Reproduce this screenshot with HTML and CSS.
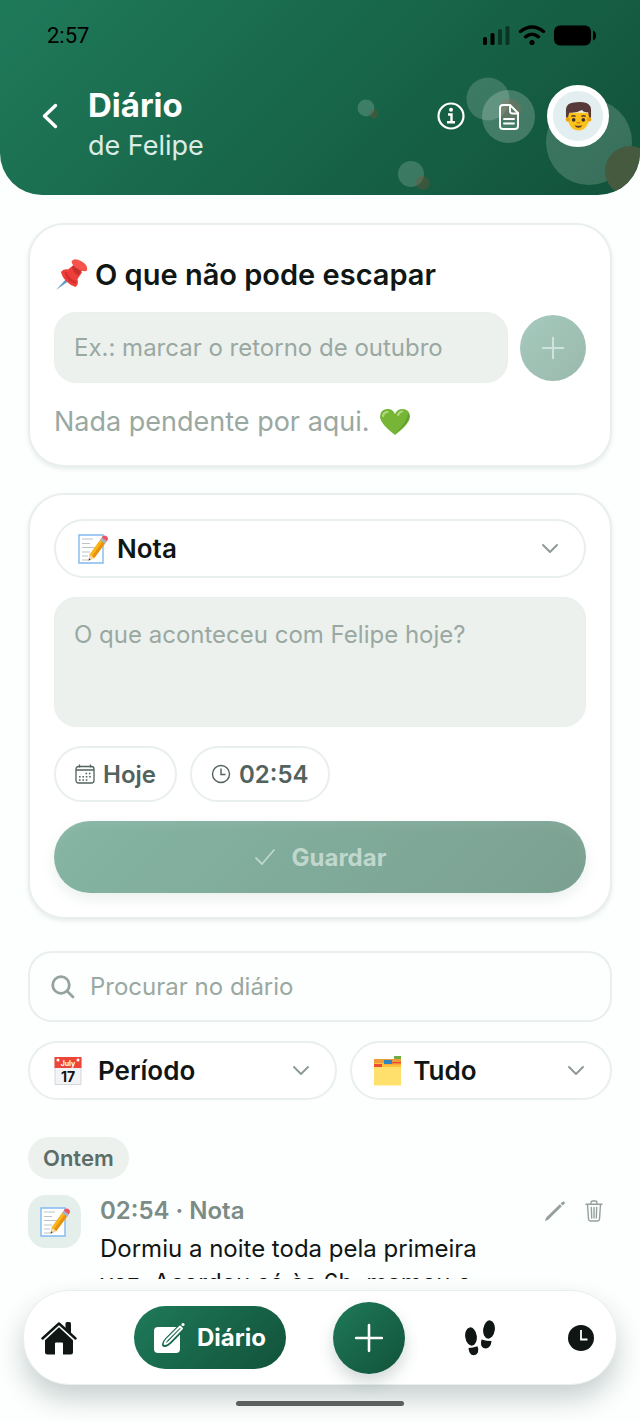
FILE: index.html
```html
<!DOCTYPE html>
<html lang="pt-BR">

<head>
    <meta charset="UTF-8">
    <meta name="viewport" content="width=device-width, initial-scale=1.0">
    <title>Diário de Felipe</title>
    <link rel="stylesheet" href="styles.css">
</head>

<body>
    <!-- shared icons -->
    <svg class="sprite" aria-hidden="true">
        <symbol id="memo" viewBox="0 0 30 30">
            <path d="M1 1h24v28H1z" fill="#fff" stroke="#82b9ee" stroke-width="1.4"/>
            <path d="M4 5h11M4 9.500h8M4 13.500h15M4 18h8M4 22h6M4 26h8" stroke="#b9c3c8" stroke-width="1"/>
            <path d="M11.500 20.500 23 4.500l5 3.800L16.300 24l-5.600 2.600z" fill="#fbb41a"/>
            <path d="M14 22.300 25.500 6.300l2.500 2L16.300 24z" fill="#e99211"/>
            <path d="M11.500 20.500l4.800 3.500-5.600 2.600z" fill="#f3d6a4"/>
            <path d="M11 24.300l1.700 1.300-2 1z" fill="#3b3b3b"/>
            <path d="M22 5.900l1.700-2.300 5 3.800L27 9.700z" fill="#9fb6c3"/>
            <path d="M23.700 3.600l1-1.400q2-1.600 4 0t.900 3.900l-.9 1.300z" fill="#ee5461"/>
        </symbol>
        <symbol id="chevron" viewBox="0 0 18 11">
            <path d="M2 2l7 7 7-7" fill="none" stroke="currentColor" stroke-width="2" stroke-linecap="round" stroke-linejoin="round"/>
        </symbol>
        <symbol id="plus" viewBox="0 0 28 28">
            <path d="M14 2v24M2 14h24" fill="none" stroke="currentColor" stroke-width="2.400" stroke-linecap="round"/>
        </symbol>
    </svg>

    <header class="header">
        <svg class="bubbles" viewBox="0 0 300 195" width="300" height="195" aria-hidden="true">
            <g fill="#fff" fill-opacity=".17">
                <circle cx="26" cy="108" r="8.500"/>
                <circle cx="148" cy="99" r="21.500"/>
                <circle cx="71" cy="174" r="13"/>
                <circle cx="249" cy="142" r="43"/>
            </g>
            <g fill="#8a4a2c" fill-opacity=".3">
                <circle cx="34" cy="114" r="4.500"/>
                <circle cx="170" cy="110" r="11"/>
                <circle cx="83" cy="183" r="7"/>
            </g>
            <circle cx="290" cy="171" r="25" fill="#465a3f"/>
        </svg>

        <div class="status">
            <span>2:57</span>
            <svg viewBox="0 0 114 22" width="114" height="22" aria-hidden="true">
                <rect x="1" y="13" width="4" height="8" rx="1.500"/>
                <rect x="8.500" y="9" width="4" height="12" rx="1.500"/>
                <g opacity=".45">
                    <rect x="16" y="5" width="4" height="16" rx="1.500"/>
                    <rect x="23.500" y="2" width="4" height="19" rx="1.500"/>
                </g>
                <g fill="none" stroke="#000" stroke-width="3.400" stroke-linecap="round">
                    <path d="M38.500 7.500q11.500-9 23 0"/>
                    <path d="M43.500 12.800q6.500-5 13 0"/>
                </g>
                <circle cx="50" cy="18.500" r="2.600"/>
                <rect x="72" y="1.500" width="37" height="20" rx="6"/>
                <path d="M111 6.500q3 1 3 5t-3 5z"/>
            </svg>
        </div>

        <div class="header-row">
            <button class="icon-btn back" aria-label="Voltar">
                <svg viewBox="0 0 16 26" width="16" height="26"><path d="M13.500 2.500 2.500 13l11 10.500" fill="none" stroke="#fff" stroke-width="3.400" stroke-linecap="round" stroke-linejoin="round"/></svg>
            </button>
            <div class="header-title">
                <h1>Diário</h1>
                <p>de Felipe</p>
            </div>
            <button class="icon-btn info" aria-label="Informações">
                <svg viewBox="0 0 28 28" width="28" height="28" fill="none" stroke="#fff">
                    <circle cx="14" cy="14" r="12.500" stroke-width="2.200"/>
                    <path d="M11 12.500h3.500V20M10 20.300h8" stroke-width="2.400"/>
                    <circle cx="14" cy="7.800" r="2" fill="#fff" stroke="none"/>
                </svg>
            </button>
            <button class="icon-btn report" aria-label="Relatório">
                <svg viewBox="0 0 22 28" width="22" height="28" fill="none" stroke="#fff" stroke-width="1.900" stroke-linejoin="round" stroke-linecap="round">
                    <path d="M12 2H5Q2 2 2 5v18q0 3 3 3h12q3 0 3-3V10z"/>
                    <path d="M12 2.500V8q0 2.500 2.500 2.500H20M6 16h10M6 20.500h10"/>
                </svg>
            </button>
            <button class="icon-btn avatar" aria-label="Felipe">
                <svg viewBox="0 0 28 32" width="27" height="31">
                    <path d="M3 12h22v6q0 5-3 8.500-3.500 4-8 4t-8-4Q3 23 3 18z" fill="#fcc21b"/>
                    <circle cx="3" cy="19" r="2.300" fill="#e9a40c"/>
                    <circle cx="25" cy="19" r="2.300" fill="#e9a40c"/>
                    <path d="M1 17V9Q1.500 2 9 1.500q5-1 10-.2Q26.500 2 27 9v8h-2l-1-5.500q-4.500.7-6.500-2.200-5 3.200-13 2.700L3 17z" fill="#58393a"/>
                    <path d="M6.500 16q2.500-1.500 4.500 0M17 16q2-1.500 4.500 0" fill="none" stroke="#58393a" stroke-width="1.400"/>
                    <circle cx="9" cy="19.500" r="1.900" fill="#3c302e"/>
                    <circle cx="19" cy="19.500" r="1.900" fill="#3c302e"/>
                    <path d="M12.500 22.500h3" stroke="#d98b07" stroke-width="1.600" stroke-linecap="round"/>
                    <path d="M10 25q4 1.200 8 0-1 2.600-4 2.600T10 25z" fill="#5d3a2c"/>
                </svg>
            </button>
        </div>
    </header>

    <main class="content">
        <section class="card pending">
            <h2>
                <svg viewBox="0 0 34 34" width="34" height="34" aria-hidden="true">
                    <path d="M2 32 13 20l2.500 2.500z" fill="#5e9dc8"/>
                    <path d="M7 14q2-3.500 7-2.500l6-5 8 8-4.500 6.500q1.500 5-2 8Q17 28 12.500 23.500T7 14z" fill="#ee3f3b"/>
                    <path d="M13 14q3 8 9.500 9l-1 3Q12 24 10.500 14z" fill="#c62828" opacity=".6"/>
                    <path d="M18 9l5.500-4 5.500 6-4.500 6.500Q19 15 18 9z" fill="#c9302c"/>
                    <path d="M17.500 3.500Q20-.5 27 3t6 9.500q-3 2-9-1.500t-6.500-7.500z" fill="#f5534b"/>
                </svg>
                O que não pode escapar
            </h2>
            <form class="pending-form">
                <input class="field" type="text" aria-label="Nova pendência" placeholder="Ex.: marcar o retorno de outubro">
                <button class="add-btn" type="button" aria-label="Adicionar" disabled>
                    <svg width="24" height="24"><use href="#plus"/></svg>
                </button>
            </form>
            <p class="pending-empty">
                Nada pendente por aqui.
                <svg viewBox="0 0 32 28" width="32" height="28" aria-hidden="true">
                    <path d="M16 27Q1 15.500 1 8.500 1.500 1 8.500 1 14 1 16 6q2-5 7.500-5Q30.500 1 31 8.500 31 15.500 16 27z" fill="#76b536"/>
                    <path d="M4 8q1-4 4.500-4M19 7q1.500-3.200 4-3.500" fill="none" stroke="#b3d981" stroke-width="2.200" stroke-linecap="round"/>
                    <path d="M29.500 4.500q4 9-13.500 21 12-10 13.500-21z" fill="#518f2a" opacity=".6"/>
                </svg>
            </p>
        </section>

        <form class="card entry-form">
            <label class="select">
                <svg width="30" height="30" aria-hidden="true"><use href="#memo"/></svg>
                <select aria-label="Tipo de registro">
                    <option>Nota</option>
                </select>
                <svg class="chevron" width="18" height="11" aria-hidden="true"><use href="#chevron"/></svg>
            </label>
            <textarea class="field" aria-label="Registro" placeholder="O que aconteceu com Felipe hoje?"></textarea>
            <div class="chips">
                <button class="chip" type="button">
                    <svg viewBox="0 0 20 20" width="20" height="20" fill="none" stroke="currentColor">
                        <rect x="1" y="2.500" width="18" height="16.500" rx="2.500" stroke-width="1.300"/>
                        <path d="M1 6h18M4.500.500v3M15.500.500v3" stroke-width="1.300"/>
                        <path d="M10.500 9.500h6M4 12.800h12.500M4 16h9" stroke-width="1.600" stroke-dasharray="1.600 1.800"/>
                    </svg>
                    Hoje
                </button>
                <button class="chip" type="button">
                    <svg viewBox="0 0 20 20" width="20" height="20" fill="none" stroke="currentColor" stroke-width="1.400">
                        <circle cx="10" cy="10" r="8.500"/>
                        <path d="M10 4.500v6h4.500"/>
                    </svg>
                    02:54
                </button>
            </div>
            <button class="save-btn" type="button" disabled>
                <svg viewBox="0 0 22 18" width="22" height="18"><path d="M2 10l6 6L20 2" fill="none" stroke="currentColor" stroke-width="1.800" stroke-linecap="round" stroke-linejoin="round"/></svg>
                Guardar
            </button>
        </form>

        <label class="search">
            <svg viewBox="0 0 24 24" width="24" height="24" fill="none" stroke="currentColor" stroke-width="2.800" stroke-linecap="round" aria-hidden="true">
                <circle cx="10" cy="10" r="8.300"/>
                <path d="M16 16l6 6"/>
            </svg>
            <input type="search" aria-label="Procurar no diário" placeholder="Procurar no diário">
        </label>

        <div class="filters">
            <label class="select period">
                <svg viewBox="0 0 28 28" width="28" height="28" aria-hidden="true">
                    <path d="M1 1h26v26.500H1z" fill="#f2f3f4" stroke="#d3d7da" stroke-width="1"/>
                    <path d="M.500 0h27v11H.500z" fill="#ee4539"/>
                    <circle cx="4" cy="3" r="1.500" fill="#fff"/>
                    <circle cx="24" cy="3" r="1.500" fill="#fff"/>
                    <text class="cal-month" x="14" y="8.500">July</text>
                    <text class="cal-day" x="14" y="25">17</text>
                </svg>
                <select aria-label="Período">
                    <option>Período</option>
                </select>
                <svg class="chevron" width="18" height="11" aria-hidden="true"><use href="#chevron"/></svg>
            </label>
            <label class="select">
                <svg viewBox="0 0 30 30" width="30" height="30" aria-hidden="true">
                    <path d="M20 0h7v4h-7z" fill="#71ad45"/>
                    <path d="M0 3h27v10H0z" fill="#f19b38"/>
                    <path d="M10 4h8v4h-8z" fill="#2e86c1"/>
                    <path d="M0 7h10v1.500h17V11H0z" fill="#ffc13b"/>
                    <path d="M18 6h9v1.200h-9zM0 8h8v3H0z" fill="#ee4b32"/>
                    <path d="M0 11h27v18.500H0z" fill="#ffe06c"/>
                </svg>
                <select aria-label="Tipo">
                    <option>Tudo</option>
                </select>
                <svg class="chevron" width="18" height="11" aria-hidden="true"><use href="#chevron"/></svg>
            </label>
        </div>

        <h3 class="day">Ontem</h3>
        <article class="entry">
            <div class="entry-icon">
                <svg width="30" height="30" aria-hidden="true"><use href="#memo"/></svg>
            </div>
            <div class="entry-text">
                <h4>02:54 · Nota</h4>
                <p>Dormiu a noite toda pela primeira vez. Acordou só às 6h, mamou e</p>
            </div>
            <div class="entry-actions">
                <button class="icon-btn" aria-label="Editar">
                    <svg viewBox="0 0 20 20" width="20" height="20"><path d="M0 20l1.200-3.500L14.800 3.200l2 2L3.200 18.800zM15.600 2.400 17.200.900q1.500-1 2.300 0t0 1.900l-1.700 1.600z" fill="currentColor"/></svg>
                </button>
                <button class="icon-btn" aria-label="Excluir">
                    <svg viewBox="0 0 18 22" width="18" height="22" fill="none" stroke="currentColor" stroke-width="1.400" stroke-linecap="round">
                        <path d="M1 4.300h16M6 4V2.500Q6 1 7.500 1h3Q12 1 12 2.500V4M2.500 4.500l1 14.500q.2 2 2 2h7q1.800 0 2-2l1-14.500M6.300 7.500l.4 10.500M9 7.500V18M11.700 7.500 11.300 18"/>
                    </svg>
                </button>
            </div>
        </article>
    </main>

    <footer class="footer">
        <nav class="tabs">
            <a class="tab" href="#" aria-label="Início">
                <svg viewBox="0 0 36 34" width="36" height="34">
                    <path d="M1.500 17.500 18 2.500l16.500 15" fill="none" stroke="currentColor" stroke-width="2.400" stroke-linecap="round" stroke-linejoin="round"/>
                    <path d="M24.500 2.500q0-1.500 1.500-1.500h2.500q1.500 0 1.500 1.500v10l-5.500-5z" fill="currentColor"/>
                    <path d="M18 6.200l14 13V31q0 2.500-2.500 2.500H22v-11q0-1-1-1h-6q-1 0-1 1v11H6.500Q4 33.500 4 31V19.200z" fill="currentColor"/>
                </svg>
            </a>
            <a class="tab active" href="#">
                <svg viewBox="0 0 32 32" width="32" height="32">
                    <rect x="1" y="5" width="26" height="26" rx="4" fill="#fff"/>
                    <path d="M28 4 14.500 17.500q-2.500 2.500-3 5 2.500 0 5-2.800L30 6" fill="none" stroke="#17694b" stroke-width="5" stroke-linejoin="round"/>
                    <path d="M27 4.500 14 17.500q-2.500 2.500-2.500 4.500 2 .5 4.800-2.300L29 6.500z" fill="#17694b" stroke="#fff" stroke-width="1.900" stroke-linejoin="round"/>
                    <circle cx="30" cy="2.500" r="1.600" fill="#fff"/>
                </svg>
                Diário
            </a>
            <a class="tab add" href="#" aria-label="Novo registro">
                <svg width="30" height="30"><use href="#plus"/></svg>
            </a>
            <a class="tab" href="#" aria-label="Passos">
                <svg viewBox="0 0 32 36" width="32" height="36" fill="currentColor">
                    <ellipse cx="7" cy="16.500" rx="5.800" ry="9.200" transform="rotate(-8 7 16.500)"/>
                    <path d="M4.500 28q4.500 0 9-1.700 1.500 3.200.5 6-1.500 3-4.500 3-4.500-.5-5-7.300z"/>
                    <ellipse cx="25" cy="9.500" rx="5.800" ry="9.200" transform="rotate(8 25 9.500)"/>
                    <path d="M17.500 19.500q5 1.500 10 1.500-.5 7-5.500 7.500-3.500 0-4.700-3-.6-3 .2-6z"/>
                </svg>
            </a>
            <a class="tab" href="#" aria-label="Histórico">
                <svg viewBox="0 0 26 26" width="26" height="26">
                    <circle cx="13" cy="13" r="13" fill="currentColor"/>
                    <path d="M13 5v9.500h6.500" fill="none" stroke="#fff" stroke-width="1.800"/>
                </svg>
            </a>
        </nav>
        <div class="home-bar"></div>
    </footer>
</body>

</html>
```
FILE: styles.css
```css
*{
    box-sizing: border-box;
    margin: 0;
    padding: 0;
}
:root{
    --ink: #0f1614;
    --muted: #9aa8a2;
    --soft: #ecf1ee;
    --line: #e9efed;
    --green: linear-gradient(135deg, #1f7a5a, #11523a);
}
body{
    height: 100vh;
    display: flex;
    flex-direction: column;
    overflow: hidden;
    background: #fdfefe;
    color: var(--ink);
    font-family: Inter, "Liberation Sans", sans-serif;
    font-size: 24px;
}
svg{
    flex: none;
}
button, input, select, textarea{
    font: inherit;
    color: inherit;
    border: none;
    outline: none;
    background: none;
}
input, select{
    min-width: 0;
}
::placeholder{
    color: var(--muted);
    opacity: 1;
}
.sprite{
    position: absolute;
    width: 0;
    height: 0;
}

/* header */
.header{
    position: relative;
    flex: none;
    padding: 0 31px 28px 32px;
    border-radius: 0 0 42px 42px;
    overflow: hidden;
    background: var(--green);
    color: #fff;
}
.bubbles{
    position: absolute;
    top: 0;
    right: 0;
}
.status{
    position: relative;
    height: 70px;
    margin-bottom: 15px;
    padding: 0 13px 0 15px;
    display: flex;
    align-items: center;
    justify-content: space-between;
    color: #000;
    font-family: Roboto, sans-serif;
    font-size: 22px;
}
.header-row{
    position: relative;
    display: flex;
    gap: 12px;
}
.header-title{
    flex: 1;
    padding-left: 8px;
}
.header-title h1{
    font-size: 33px;
    font-weight: 700;
    line-height: 40px;
}
.header-title p{
    font-size: 27px;
    line-height: 42px;
    color: #dcece5;
}
.icon-btn{
    display: flex;
    align-items: center;
    justify-content: center;
    cursor: pointer;
}
.back{
    width: 36px;
    height: 62px;
}
.info{
    width: 38px;
    height: 62px;
}
.report{
    width: 53px;
    height: 53px;
    margin-top: 5px;
    border-radius: 50%;
    background: rgba(255,255,255,.2);
}
.avatar{
    width: 62px;
    height: 62px;
    border: 6px solid #fff;
    border-radius: 50%;
    background: #e3eef0;
}

/* content */
.content{
    flex: 1;
    min-height: 0;
    padding: 28px 28px 0;
    overflow-y: auto;
    scrollbar-width: none;
}
.card{
    border: 2px solid var(--line);
    border-radius: 36px;
    background: #fff;
    box-shadow: 0 2px 4px rgba(20,90,70,.1);
}
.pending{
    padding: 32px 24px 22px;
    margin-bottom: 26px;
}
.pending h2{
    display: flex;
    align-items: center;
    gap: 7px;
    margin-bottom: 19px;
    font-size: 29px;
    font-weight: 600;
    line-height: 36px;
}
.pending-form{
    display: flex;
    align-items: center;
    gap: 12px;
    margin-bottom: 18px;
}
.field{
    flex: 1;
    height: 71px;
    padding: 0 19px;
    border: 1px solid var(--line);
    border-radius: 22px;
    background: var(--soft);
}
.add-btn{
    width: 66px;
    height: 66px;
    display: flex;
    align-items: center;
    justify-content: center;
    border-radius: 50%;
    background: linear-gradient(135deg, #a5cabd, #9bb9ad);
    color: #cfe2db;
}
.pending-empty{
    display: flex;
    align-items: center;
    gap: 9px;
    font-size: 27px;
    line-height: 42px;
    color: var(--muted);
}
.entry-form{
    display: flex;
    flex-direction: column;
    gap: 19px;
    padding: 24px;
    margin-bottom: 32px;
}
.select{
    height: 59px;
    display: flex;
    align-items: center;
    gap: 9px;
    padding: 0 25px 0 22px;
    border: 2px solid var(--line);
    border-radius: 30px;
    background: #fff;
    font-size: 26px;
    font-weight: 600;
}
.select select{
    flex: 1;
    appearance: none;
}
.chevron{
    color: #8f9b97;
}
.period{
    gap: 16px;
    padding-left: 24px;
}
.cal-month{
    fill: #fff;
    font-size: 7px;
    font-weight: 700;
    text-anchor: middle;
}
.cal-day{
    fill: #111;
    font-size: 14px;
    font-weight: 700;
    text-anchor: middle;
}
.entry-form textarea{
    flex: none;
    height: 130px;
    padding: 22px 19px;
    resize: none;
}
.chips{
    display: flex;
    gap: 13px;
}
.chip{
    height: 56px;
    display: flex;
    align-items: center;
    gap: 8px;
    padding: 0 19px;
    border: 2px solid var(--line);
    border-radius: 28px;
    font-weight: 600;
    color: #52625d;
}
.save-btn{
    height: 72px;
    display: flex;
    align-items: center;
    justify-content: center;
    gap: 16px;
    border-radius: 36px;
    background: linear-gradient(135deg, #85b5a3, #7ba091);
    box-shadow: 0 6px 14px rgba(20,90,70,.09), inset 0 6px 10px rgba(255,255,255,.06);
    font-weight: 700;
    color: #bfd7cd;
}
.search{
    height: 71px;
    display: flex;
    align-items: center;
    gap: 15px;
    margin-bottom: 19px;
    padding: 0 21px;
    border: 2px solid var(--line);
    border-radius: 24px;
    color: #95a39e;
}
.search input{
    flex: 1;
}
.filters{
    display: grid;
    grid-template-columns: 13fr 11fr;
    gap: 13px;
    margin-bottom: 37px;
}

/* diary */
.day{
    width: fit-content;
    padding: 0 15px;
    margin-bottom: 16px;
    border-radius: 21px;
    background: var(--soft);
    font-size: 22px;
    font-weight: 600;
    line-height: 42px;
    color: #5c6c66;
}
.entry{
    display: flex;
    align-items: flex-start;
}
.entry-icon{
    width: 53px;
    height: 53px;
    display: flex;
    align-items: center;
    justify-content: center;
    margin-right: 19px;
    border-radius: 18px;
    background: #e4eeea;
}
.entry-text{
    flex: 1;
    padding-right: 32px;
}
.entry-text h4{
    margin-bottom: 5px;
    font-size: 24px;
    font-weight: 600;
    line-height: 32px;
    color: #7b8b85;
}
.entry-text p{
    line-height: 34px;
}
.entry-actions{
    display: flex;
    gap: 3px;
}
.entry-actions .icon-btn{
    width: 36px;
    height: 32px;
    color: #95a09c;
}

/* bottom bar */
.footer{
    flex: none;
    padding: 11px 23px 16px;
}
.tabs{
    height: 95px;
    display: flex;
    align-items: center;
    justify-content: space-between;
    padding: 0 8px;
    border: 1px solid var(--line);
    border-radius: 46px;
    background: #fff;
    box-shadow: 0 14px 26px rgba(30,65,60,.24);
}
.tab{
    width: 54px;
    height: 63px;
    display: flex;
    align-items: center;
    justify-content: center;
    color: var(--ink);
    text-decoration: none;
}
.tab.active{
    width: 152px;
    gap: 12px;
    border-radius: 32px;
    background: var(--green);
    color: #fff;
    font-weight: 700;
}
.tab.add{
    width: 72px;
    height: 72px;
    border-radius: 50%;
    background: var(--green);
    color: #fff;
    box-shadow: 0 8px 16px rgba(30,65,60,.2);
}
.home-bar{
    width: 168px;
    height: 5px;
    margin: 16px auto 0;
    border-radius: 3px;
    background: #5b5f5e;
}
```
